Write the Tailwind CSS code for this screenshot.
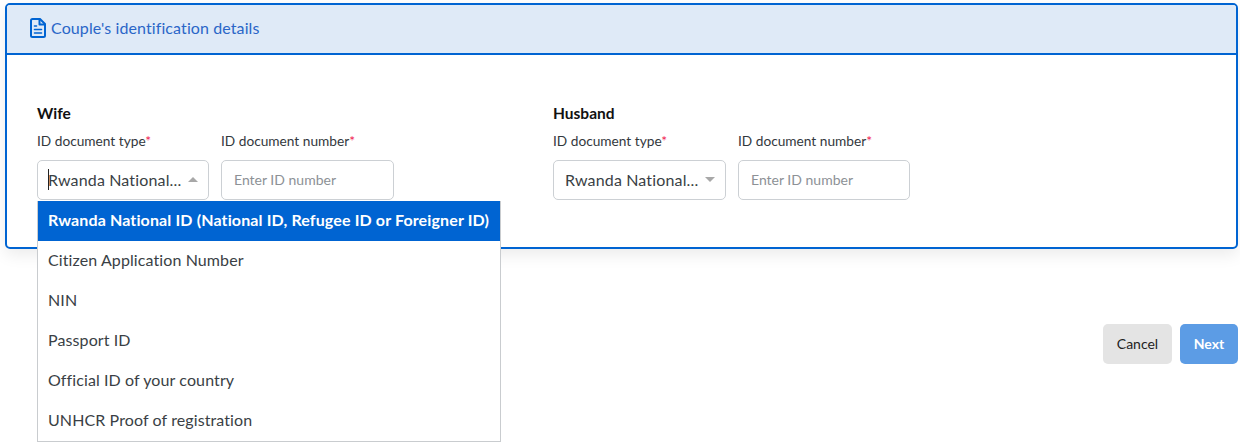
<!DOCTYPE html>
<html lang="en">
<head>
<meta charset="utf-8">
<title>Couple's identification details</title>
<script src="https://cdn.jsdelivr.net/npm/@tailwindcss/browser@4"></script>
</head>
<body class="bg-white font-['Lato','Noto_Sans',sans-serif] text-[#3a3f45] overflow-hidden">
  <div class="w-[1240px] h-[448px] pt-[3px] pl-[5px] pr-[2px]">
    <!-- card -->
    <section class="h-[246px] border-2 border-[#0064d2] rounded-[5px] shadow-[0_6px_16px_rgba(0,0,0,0.08)]">
      <header class="h-[50px] flex items-center gap-[5px] pl-[23px] pb-[2px] bg-[#dfeaf7] border-b-2 border-[#0064d2] rounded-t-[3px] text-[#2a66c8] text-[16px] tracking-[0.1px]">
        <svg class="w-[16px] h-[20px]" viewBox="0 0 16 20" fill="none" stroke="#0064d2" stroke-width="2" stroke-linejoin="round" stroke-linecap="round">
          <path d="M2.5 1h7.5L15 6v11.5a1.5 1.5 0 0 1-1.5 1.5h-11A1.5 1.5 0 0 1 1 17.5v-15A1.5 1.5 0 0 1 2.5 1z"/>
          <path d="M9.5 1.5v5h5"/>
          <path d="M4.5 8h2M4.5 11.5h7M4.5 15h7" stroke-width="1.6"/>
        </svg>
        <span>Couple's identification details</span>
      </header>
      <div class="flex pl-[30px] pt-[48px]">
        <!-- wife -->
        <div class="relative w-[516px]">
          <h3 class="text-[15.5px] leading-[20px] font-bold text-[#111]">Wife</h3>
          <div class="flex gap-[12px] mt-[8px]">
            <div class="w-[172px]">
              <label class="block text-[13.7px] leading-[20px] text-[#33383d]">ID document type<span class="text-[#f0144b]">*</span></label>
              <div class="mt-[9px] h-[40px] flex items-center pl-[10px] pr-[10px] pb-[1px] border border-[#ccd0d4] rounded-[5px] text-[16px] tracking-[0.15px]">
                <span class="w-px h-[21px] mr-[-1px] bg-[#222]"></span>
                <span class="flex-1 truncate">Rwanda National...</span>
                <span class="ml-[3px] border-x-[5px] border-x-transparent border-b-[5px] border-b-[#a8a8a8]"></span>
              </div>
            </div>
            <div class="w-[173px]">
              <label class="block text-[13.7px] leading-[20px] text-[#33383d]">ID document number<span class="text-[#f0144b]">*</span></label>
              <input class="mt-[9px] w-full h-[40px] px-[12px] pb-[1px] border border-[#ccd0d4] rounded-[5px] text-[14px] placeholder:text-[#8d9196] outline-none" placeholder="Enter ID number">
            </div>
          </div>
          <!-- open menu -->
          <ul class="absolute z-10 left-0 top-[98px] w-[464px] bg-white border border-[#c9cccf] border-t-0 text-[16px] tracking-[0.1px] text-[#3a3f45]">
            <li class="h-[40px] flex items-center pl-[10px] pb-[2px] bg-[#0064d2] text-white font-bold tracking-[0.13px] whitespace-nowrap">Rwanda National ID (National ID, Refugee ID or Foreigner ID)</li>
            <li class="h-[40px] flex items-center pl-[10px] pb-[2px]">Citizen Application Number</li>
            <li class="h-[40px] flex items-center pl-[10px] pb-[2px]">NIN</li>
            <li class="h-[40px] flex items-center pl-[10px] pb-[2px]">Passport ID</li>
            <li class="h-[40px] flex items-center pl-[10px] pb-[2px]">Official ID of your country</li>
            <li class="h-[40px] flex items-center pl-[10px] pb-[2px]">UNHCR Proof of registration</li>
          </ul>
        </div>
        <!-- husband -->
        <div>
          <h3 class="text-[15.5px] leading-[20px] font-bold text-[#111]">Husband</h3>
          <div class="flex gap-[12px] mt-[8px]">
            <div class="w-[173px]">
              <label class="block text-[13.7px] leading-[20px] text-[#33383d]">ID document type<span class="text-[#f0144b]">*</span></label>
              <div class="mt-[9px] h-[40px] flex items-center pl-[11px] pr-[10px] pb-[1px] border border-[#ccd0d4] rounded-[5px] text-[16px] tracking-[0.15px]">
                <span class="flex-1 truncate">Rwanda National...</span>
                <span class="ml-[3px] border-x-[5px] border-x-transparent border-t-[5px] border-t-[#a8a8a8]"></span>
              </div>
            </div>
            <div class="w-[172px]">
              <label class="block text-[13.7px] leading-[20px] text-[#33383d]">ID document number<span class="text-[#f0144b]">*</span></label>
              <input class="mt-[9px] w-full h-[40px] px-[12px] pb-[1px] border border-[#ccd0d4] rounded-[5px] text-[14px] placeholder:text-[#8d9196] outline-none" placeholder="Enter ID number">
            </div>
          </div>
        </div>
      </div>
    </section>
    <!-- actions -->
    <div class="flex justify-end gap-[8px] mt-[75px]">
      <button class="w-[69px] h-[40px] pb-[2px] rounded-[5px] bg-[#e4e4e4] text-[14px] text-[#222]">Cancel</button>
      <button class="w-[58px] h-[40px] pb-[2px] rounded-[5px] bg-[#5c9ce5] text-[14px] font-bold text-white">Next</button>
    </div>
  </div>
</body>
</html>
